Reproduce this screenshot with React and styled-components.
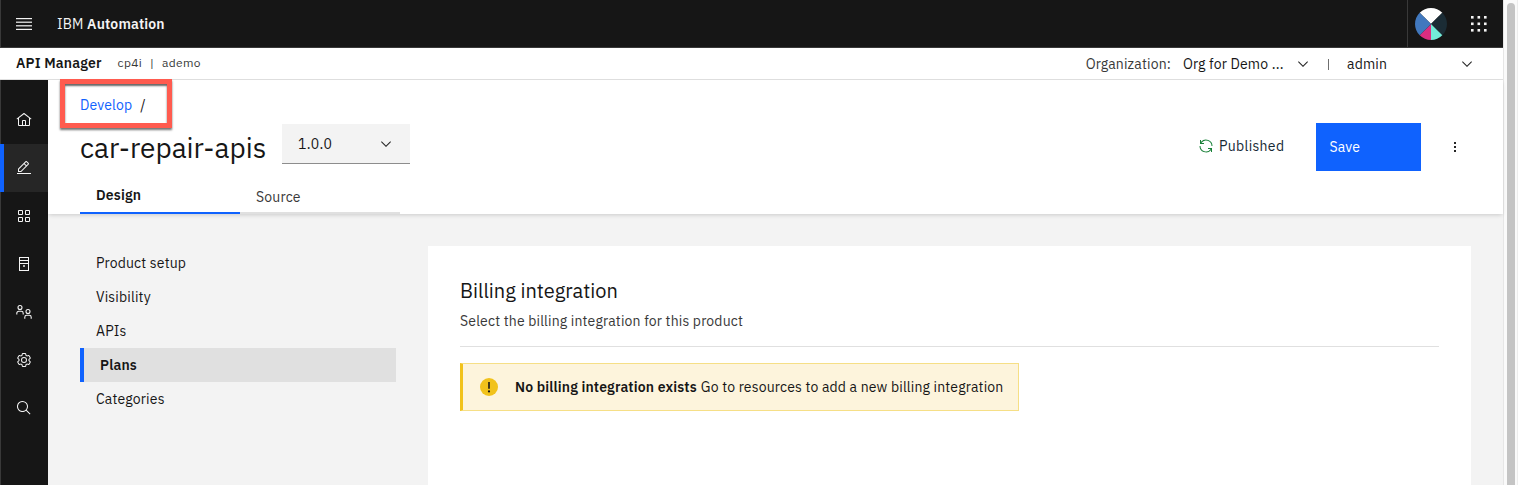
import React from 'react';
import styled, { createGlobalStyle, css } from 'styled-components';

const GlobalStyle = createGlobalStyle`
  *, *::before, *::after { box-sizing: border-box; }
  html, body { margin: 0; padding: 0; height: 100%; overflow: hidden; }
  body {
    background: #f3f3f3;
    color: #161616;
    font-family: "IBM Plex Sans", Roboto, "Liberation Sans", sans-serif;
    font-size: 14px;
    line-height: 18px;
  }
`;

const Window = styled.div`
  display: flex;
  height: 485px;
  overflow: hidden;
`;

const Page = styled.div`
  display: flex;
  flex-direction: column;
  flex: 1;
  min-width: 0;
`;

const ScrollTrack = styled.div`
  width: 15px;
  padding: 3px 3px 0;
  background: #fafafa;
  border-left: 1px solid #e6e6e6;
  border-right: 1px solid #ededed;
`;

const ScrollThumb = styled.div`
  width: 8px;
  height: 600px;
  border-radius: 4px;
  background: #c4c4c4;
`;

const Label = styled.span`
  display: block;
  white-space: pre;
  font-size: ${(p) => p.$size || 14}px;
  font-weight: ${(p) => (p.$bold ? 600 : 400)};
  letter-spacing: ${(p) => p.$track ?? 0.16}px;
  color: ${(p) => p.$color || '#161616'};
`;

const TopBar = styled.header`
  display: flex;
  align-items: center;
  flex: none;
  height: 48px;
  background: #161616;
  border-bottom: 1px solid #393939;
  border-left: 1px solid #393939;
`;

const MenuButton = styled.div`
  display: flex;
  justify-content: center;
  width: 46px;
`;

const Brand = styled.div`
  display: flex;
  flex: 1;
  padding-left: 10px;
`;

const TopActions = styled.div`
  display: flex;
  align-items: center;
  width: 96px;
  height: 47px;
  border-left: 1px solid #393939;
  padding-left: 7px;
  gap: 24px;
`;

const SubBar = styled.div`
  display: flex;
  align-items: center;
  flex: none;
  height: 32px;
  padding: 0 28px 0 16px;
  background: #fff;
  border-bottom: 1px solid #e0e0e0;
`;

const Instance = styled.div`
  display: flex;
  flex: 1;
  margin-left: 16px;
  gap: 8px;
`;

const Product = styled.div`
  display: flex;
  flex: 1;
  padding-bottom: 2px;
`;

const Context = styled.div`
  display: flex;
  align-items: center;
  padding-top: 1px;
`;

const Picker = styled.div`
  display: flex;
  align-items: center;
  justify-content: space-between;
  width: 128px;
`;

const ContextLabel = styled(Label)`
  margin-right: 12px;
`;

const Divider = styled.div`
  width: 1px;
  height: 11px;
  margin: 1px 18px 0 17px;
  background: #6f6f6f;
`;

const Main = styled.div`
  display: flex;
  flex: 1;
  min-height: 0;
`;

const SideNav = styled.nav`
  width: 48px;
  flex: none;
  padding-top: 16px;
  background: #161616;
  box-shadow: inset 1px 0 #393939;
`;

const SideItem = styled.div`
  display: flex;
  align-items: center;
  justify-content: center;
  height: 48px;
  ${(p) => p.$active && css`
    background: #262626;
    box-shadow: inset 4px 0 #0f62fe;
  `}
`;

const Content = styled.main`
  display: flex;
  flex-direction: column;
  flex: 1;
  min-width: 0;
`;

const Head = styled.section`
  position: relative;
  z-index: 1;
  display: flex;
  flex-direction: column;
  flex: none;
  height: 134px;
  padding: 0 32px;
  background: #fff;
  box-shadow: 0 2px 4px -1px rgba(0, 0, 0, 0.17);
`;

const Breadcrumb = styled.div`
  position: relative;
  display: flex;
  align-self: flex-start;
  gap: 8px;
  padding-top: 16px;
  height: 43px;
`;

const Highlight = styled.div`
  position: absolute;
  left: -20px;
  top: -1px;
  width: 112px;
  height: 49px;
  border: 5px solid #ff5b4f;
  box-shadow: 0 2px 2px rgba(0, 0, 0, 0.55), inset 0 2px 2px rgba(0, 0, 0, 0.6);
`;

const TitleRow = styled.div`
  display: flex;
  height: 48px;
`;

const Title = styled.h1`
  margin: 0;
  width: 202px;
  padding-top: 7px;
  font-size: 28px;
  line-height: 36px;
  font-weight: 400;
  letter-spacing: 0;
  white-space: nowrap;
`;

const VersionSelect = styled.div`
  display: flex;
  align-items: center;
  justify-content: space-between;
  width: 128px;
  height: 40px;
  margin-top: 1px;
  padding: 0 16px;
  background: #f3f3f3;
  border-bottom: 1px solid #8d8d8d;
`;

const HeadActions = styled.div`
  display: flex;
  align-items: center;
  margin-left: auto;
  padding-right: 8px;
`;

const Status = styled.div`
  display: flex;
  align-items: center;
  gap: 5px;
  width: 118px;
  padding-bottom: 2px;
`;

const SaveButton = styled.button`
  width: 105px;
  height: 48px;
  margin-right: 26px;
  padding: 0 13.5px;
  border: 0;
  background: #0f62fe;
  font-family: inherit;
  text-align: left;
`;

const Tabs = styled.div`
  display: flex;
  margin-top: auto;
`;

const Tab = styled.div`
  width: 160px;
  height: 30px;
  padding: ${(p) => (p.$active ? '2px' : '4px')} 16px 0;
  border-bottom: 2px solid ${(p) => (p.$active ? '#0f62fe' : '#e0e0e0')};
`;

const Body = styled.div`
  display: flex;
  flex: 1;
  min-height: 0;
  padding: 32px 32px 0;
`;

const SectionNav = styled.div`
  width: 316px;
  margin-right: 32px;
`;

const SectionLink = styled.div`
  display: flex;
  align-items: center;
  height: 34px;
  padding-left: 16px;
  ${(p) => p.$active && css`
    background: #e0e0e0;
    border-left: 4px solid #0f62fe;
  `}
`;

const Card = styled.section`
  flex: 1;
  padding: 32px 32px 0;
  background: #fff;
`;

const CardTitle = styled.h2`
  margin: 0 0 8px;
  font-size: 20px;
  line-height: 26px;
  font-weight: 400;
  letter-spacing: 0;
`;

const CardIntro = styled.div`
  padding-bottom: 16px;
  margin-bottom: 16px;
  border-bottom: 1px solid #e0e0e0;
`;

const Notice = styled.div`
  display: flex;
  align-items: center;
  width: 559px;
  height: 48px;
  padding-left: 17px;
  background: #fdf4dc;
  border: 1px solid #f6df86;
  border-left: 3px solid #f1c21b;
`;

const NoticeText = styled.div`
  display: flex;
  gap: 4px;
  margin-left: 17px;
`;

const Icon = ({ d, size = 16, box = 32, color = '#f4f4f4', children }) => (
  <svg width={size} height={size} viewBox={`0 0 ${box} ${box}`} fill={color}>
    {d && <path d={d} />}
    {children}
  </svg>
);

const Chevron = ({ color = '#262626' }) => (
  <Icon box={16} color={color} d="M8 11 3 6l.7-.7L8 9.6l4.3-4.3.7.7z" />
);

const HomeIcon = () => (
  <Icon d="M16.61 2.21a1.01 1.01 0 0 0-1.24 0L1 13.42l1.24 1.57L4 13.62V26a2 2 0 0 0 2 2h20a2 2 0 0 0 2-2V13.63L29.76 15 31 13.43ZM18 26h-4v-8h4Zm2 0v-8a2 2 0 0 0-2-2h-4a2 2 0 0 0-2 2v8H6V12.06l10-7.79 10 7.8V26Z" />
);

const EditIcon = () => (
  <Icon d="M2 26h28v2H2zM25.4 9c.8-.8.8-2 0-2.8l-3.6-3.6c-.8-.8-2-.8-2.8 0l-15 15V24h6.4zM20.4 4 24 7.6l-3 3L17.4 7zM6 22v-3.6l10-10 3.6 3.6-10 10z" />
);

const GridIcon = () => (
  <Icon d="M12 4H6a2 2 0 0 0-2 2v6a2 2 0 0 0 2 2h6a2 2 0 0 0 2-2V6a2 2 0 0 0-2-2Zm0 8H6V6h6ZM26 4h-6a2 2 0 0 0-2 2v6a2 2 0 0 0 2 2h6a2 2 0 0 0 2-2V6a2 2 0 0 0-2-2Zm0 8h-6V6h6ZM12 18H6a2 2 0 0 0-2 2v6a2 2 0 0 0 2 2h6a2 2 0 0 0 2-2v-6a2 2 0 0 0-2-2Zm0 8H6v-6h6ZM26 18h-6a2 2 0 0 0-2 2v6a2 2 0 0 0 2 2h6a2 2 0 0 0 2-2v-6a2 2 0 0 0-2-2Zm0 8h-6v-6h6Z" />
);

const ServerIcon = () => (
  <Icon box={16}>
    <path d="M3 1h10v14H3zM4 2v2h8V2zM4 5v2h8V5zM4 8v6h8V8z" fillRule="evenodd" />
    <rect x="7" y="9" width="2" height="2" opacity=".7" />
  </Icon>
);

const PeopleIcon = () => (
  <Icon box={16} color="none">
    <g stroke="#f4f4f4" strokeWidth="1.1">
      <circle cx="4" cy="3.5" r="2" />
      <path d="M.8 10.5V9.2a1.9 1.9 0 0 1 1.9-1.9h2.6a1.9 1.9 0 0 1 1.9 1.9v1.3" />
      <circle cx="12" cy="7.5" r="2" />
      <path d="M8.8 14.7v-1.5a1.9 1.9 0 0 1 1.9-1.9h2.6a1.9 1.9 0 0 1 1.9 1.9v1.5" />
    </g>
  </Icon>
);

const SettingsIcon = () => (
  <Icon d="M27 16.76v-1.53l1.92-1.68A2 2 0 0 0 29.3 11l-2.36-4a2 2 0 0 0-1.73-1 2 2 0 0 0-.64.1l-2.43.82a11.35 11.35 0 0 0-1.31-.75l-.51-2.52a2 2 0 0 0-2-1.61h-4.68a2 2 0 0 0-2 1.61l-.51 2.52a11.48 11.48 0 0 0-1.32.75l-2.38-.86A2 2 0 0 0 6.79 6a2 2 0 0 0-1.73 1L2.7 11a2 2 0 0 0 .41 2.51L5 15.24v1.53l-1.89 1.68A2 2 0 0 0 2.7 21l2.36 4a2 2 0 0 0 1.73 1 2 2 0 0 0 .64-.1l2.43-.82a11.35 11.35 0 0 0 1.31.75l.51 2.52a2 2 0 0 0 2 1.61h4.72a2 2 0 0 0 2-1.61l.51-2.52a11.48 11.48 0 0 0 1.32-.75l2.42.82a2 2 0 0 0 .64.1 2 2 0 0 0 1.73-1l2.28-4a2 2 0 0 0-.41-2.51ZM25.21 24l-3.43-1.16a8.86 8.86 0 0 1-2.71 1.57L18.36 28h-4.72l-.71-3.55a9.36 9.36 0 0 1-2.7-1.57L6.79 24l-2.36-4 2.72-2.4a8.9 8.9 0 0 1 0-3.13L4.43 12l2.36-4 3.43 1.16a8.86 8.86 0 0 1 2.71-1.57L13.64 4h4.72l.71 3.55a9.36 9.36 0 0 1 2.7 1.57L25.21 8l2.36 4-2.72 2.4a8.9 8.9 0 0 1 0 3.13l2.72 2.47ZM16 22a6 6 0 1 1 6-6 5.94 5.94 0 0 1-6 6Zm0-10a3.91 3.91 0 0 0-4 4 3.91 3.91 0 0 0 4 4 3.91 3.91 0 0 0 4-4 3.91 3.91 0 0 0-4-4Z" />
);

const SearchIcon = () => (
  <Icon d="m29 27.59-7.55-7.56a11.02 11.02 0 1 0-1.42 1.42L27.59 29ZM4 13a9 9 0 1 1 9 9 9.01 9.01 0 0 1-9-9Z" />
);

const Avatar = () => (
  <svg width="32" height="32" viewBox="-16 -16 32 32">
    <path d="M0 0-11.3-11.3A16 16 0 0 1 11.3-11.3Z" fill="#fff" />
    <path d="M0 0 11.3-11.3A16 16 0 0 1 11.3 11.3Z" fill="#1b2c35" />
    <path d="M0 0 11.3 11.3A16 16 0 0 1 0 16Z" fill="#73ecd9" />
    <path d="M0 0V16A16 16 0 0 1-11.3 11.3Z" fill="#dc2d80" />
    <path d="M0 0-11.3 11.3A16 16 0 0 1-11.3-11.3Z" fill="#4178be" />
  </svg>
);

const AppSwitcher = () => (
  <svg width="16" height="16" fill="#f4f4f4">
    {[0, 6.5, 13].map((y) => [0, 6.5, 13].map((x) => (
      <rect key={`${x}-${y}`} x={x} y={y} width="2.6" height="2.6" />
    )))}
  </svg>
);

const MenuIcon = () => (
  <svg width="16" height="12" fill="#f4f4f4">
    {[0, 3.6, 7.2, 10.8].map((y) => <rect key={y} y={y} width="16" height="1.2" />)}
  </svg>
);

const WarningIcon = () => (
  <svg width="18" height="18" viewBox="0 0 18 18">
    <circle cx="9" cy="9" r="9" fill="#f1c21b" />
    <path d="M8.2 4h1.6v6.8H8.2z" fill="#161616" />
    <circle cx="9" cy="13.4" r="1.1" fill="#161616" />
  </svg>
);

const OverflowIcon = () => (
  <svg width="16" height="16" fill="#262626">
    {[3, 7, 11].map((y) => <rect key={y} x="7" y={y} width="2" height="2" />)}
  </svg>
);

const sideItems = [HomeIcon, EditIcon, GridIcon, ServerIcon, PeopleIcon, SettingsIcon, SearchIcon];

const sections = ['Product setup', 'Visibility', 'APIs', 'Plans', 'Categories'];
const activeSection = 'Plans';

export default function App() {
  return (
    <>
      <GlobalStyle />
      <Window>
        <Page>
          <TopBar>
            <MenuButton><MenuIcon /></MenuButton>
            <Brand>
              <Label $color="#f4f4f4">IBM </Label>
              <Label $color="#f4f4f4" $bold>Automation</Label>
            </Brand>
            <TopActions><Avatar /><AppSwitcher /></TopActions>
          </TopBar>
          <SubBar>
            <Product>
              <Label $bold>API Manager</Label>
              <Instance>
                <Label $size={12} $color="#393939" $track={0.32}>cp4i</Label>
                <Label $size={12} $color="#393939">|</Label>
                <Label $size={12} $color="#393939" $track={0.32}>ademo</Label>
              </Instance>
            </Product>
            <Context>
              <ContextLabel $color="#393939">Organization:</ContextLabel>
              <Picker>
                <Label>Org for Demo ...</Label>
                <Chevron />
              </Picker>
              <Divider />
              <Picker>
                <Label>admin</Label>
                <Chevron />
              </Picker>
            </Context>
          </SubBar>
          <Main>
            <SideNav>
              {sideItems.map((Item, i) => (
                <SideItem key={i} $active={i === 1}><Item /></SideItem>
              ))}
            </SideNav>
            <Content>
              <Head>
                <Breadcrumb>
                  <Label $color="#0f62fe">Develop</Label>
                  <Label>/</Label>
                  <Highlight />
                </Breadcrumb>
                <TitleRow>
                  <Title>car-repair-apis</Title>
                  <VersionSelect>
                    <Label $track={0.3}>1.0.0</Label>
                    <Chevron />
                  </VersionSelect>
                  <HeadActions>
                    <Status>
                      <Icon color="#198038" d="M12 10H6.78A11 11 0 0 1 27 16h2A13 13 0 0 0 6 7.68V4H4v8h8zM20 22h5.22A11 11 0 0 1 5 16H3a13 13 0 0 0 23 8.32V28h2v-8h-8z" />
                      <Label $color="#152935" $track={0.32}>Published</Label>
                    </Status>
                    <SaveButton><Label $color="#fff">Save</Label></SaveButton>
                    <OverflowIcon />
                  </HeadActions>
                </TitleRow>
                <Tabs>
                  <Tab $active><Label $bold>Design</Label></Tab>
                  <Tab><Label $color="#393939">Source</Label></Tab>
                </Tabs>
              </Head>
              <Body>
                <SectionNav>
                  {sections.map((name) => (
                    <SectionLink key={name} $active={name === activeSection}>
                      <Label $bold={name === activeSection}>{name}</Label>
                    </SectionLink>
                  ))}
                </SectionNav>
                <Card>
                  <CardTitle>Billing integration</CardTitle>
                  <CardIntro>
                    <Label $color="#393939">Select the billing integration for this product</Label>
                  </CardIntro>
                  <Notice>
                    <WarningIcon />
                    <NoticeText>
                      <Label $bold>No billing integration exists</Label>
                      <Label>Go to resources to add a new billing integration</Label>
                    </NoticeText>
                  </Notice>
                </Card>
              </Body>
            </Content>
          </Main>
        </Page>
        <ScrollTrack><ScrollThumb /></ScrollTrack>
      </Window>
    </>
  );
}
